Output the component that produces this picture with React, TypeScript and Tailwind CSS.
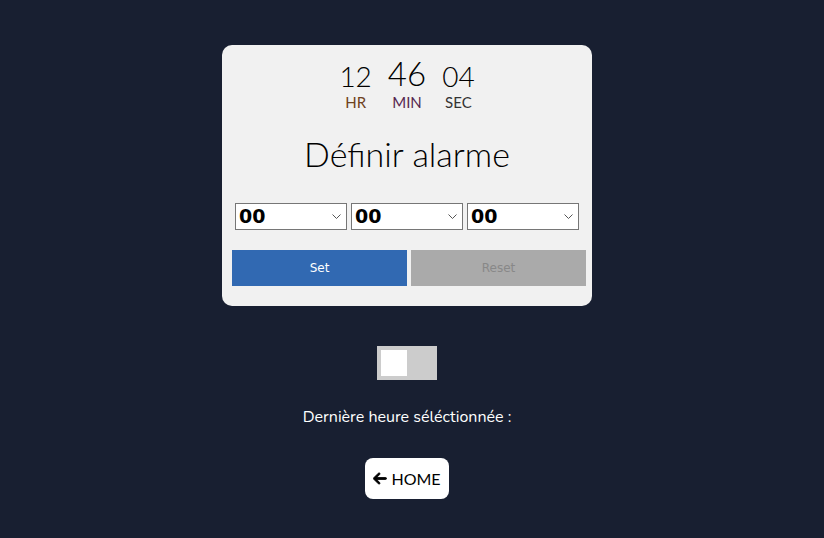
import { useState } from "react";

const raleway = { fontFamily: '"Lato", "Open Sans", sans-serif' };

function ClockUnit({
  value,
  label,
  big,
  labelClass,
}: {
  value: string;
  label: string;
  big?: boolean;
  labelClass: string;
}) {
  return (
    <div className="flex flex-col items-center">
      <span
        className={`font-light leading-none text-black ${big ? "text-[33px]" : "text-[28px] pt-[5px]"}`}
      >
        {value}
      </span>
      <span className={`mt-[5px] text-[15px] leading-none ${labelClass}`}>
        {label}
      </span>
    </div>
  );
}

function TimeSelect() {
  const [v, setV] = useState("00");
  return (
    <div className="relative">
      <select
        value={v}
        onChange={(e) => setV(e.target.value)}
        className="h-[27px] w-[112px] appearance-none border border-[#767676] bg-white pl-[3px] text-[19px] font-bold leading-none text-black"
        style={{ fontFamily: '"DejaVu Sans", sans-serif' }}
      >
        {["00", "01", "02", "03", "04", "05"].map((o) => (
          <option key={o} value={o}>
            {o}
          </option>
        ))}
      </select>
      <svg
        className="pointer-events-none absolute right-[6px] top-[11px]"
        width="9"
        height="5"
        viewBox="0 0 9 5"
        fill="none"
        stroke="#555"
        strokeWidth="1"
      >
        <path d="M0.5 0.5 L4.5 4.5 L8.5 0.5" />
      </svg>
    </div>
  );
}

export default function App() {
  const [on, setOn] = useState(false);
  return (
    <div className="flex min-h-[538px] flex-col items-center bg-[#181f31] pr-[10px] pt-[45px]">
      <div
        className="flex w-[370px] flex-col items-center rounded-[10px] bg-[#f1f1f1] pb-[20px] pt-[12px]"
        style={raleway}
      >
        <div className="flex items-end gap-[16px]">
          <ClockUnit value="12" label="HR" labelClass="text-[#6e4220]" />
          <ClockUnit value="46" label="MIN" big labelClass="text-[#55264f]" />
          <ClockUnit value="04" label="SEC" labelClass="text-[#333]" />
        </div>
        <h1 className="mt-[27px] text-[34px] font-light leading-none text-black">
          Définir alarme
        </h1>
        <div className="mt-[32px] flex gap-[4px]">
          <TimeSelect />
          <TimeSelect />
          <TimeSelect />
        </div>
        <div
          className="mt-[20px] flex w-full gap-[4px] pl-[10px] pr-[6px]"
          style={{ fontFamily: '"DejaVu Sans", sans-serif' }}
        >
          <button className="h-[36px] flex-1 bg-[#3169b2] text-[12px] text-white">
            Set
          </button>
          <button className="h-[36px] flex-1 bg-[#aaaaaa] text-[12px] text-[#888]">
            Reset
          </button>
        </div>
      </div>

      <button
        onClick={() => setOn(!on)}
        className={`mt-[40px] flex h-[34px] w-[60px] items-center bg-[#cccccc] p-[4px] ${on ? "justify-end" : "justify-start"}`}
      >
        <span className="block h-[26px] w-[26px] bg-white" />
      </button>

      <p
        className="mt-[25px] text-[16px] text-white"
        style={{ fontFamily: '"Nunito", "Lato", sans-serif' }}
      >
        Dernière heure séléctionnée :
      </p>

      <button
        className="mt-[29px] flex h-[41px] items-center gap-[4px] rounded-[8px] bg-white px-[8px] text-[16px] text-black"
        style={{ fontFamily: '"Lato", sans-serif' }}
      >
        <svg
          width="14"
          height="15"
          viewBox="0 0 448 512"
          fill="currentColor"
          stroke="currentColor"
          strokeWidth="30"
        >
          <path d="M9.4 233.4c-12.5 12.5-12.5 32.8 0 45.3l160 160c12.5 12.5 32.8 12.5 45.3 0s12.5-32.8 0-45.3L109.2 288H416c17.7 0 32-14.3 32-32s-14.3-32-32-32H109.3L214.6 118.6c12.5-12.5 12.5-32.8 0-45.3s-32.8-12.5-45.3 0l-160 160z" />
        </svg>
        HOME
      </button>
    </div>
  );
}
